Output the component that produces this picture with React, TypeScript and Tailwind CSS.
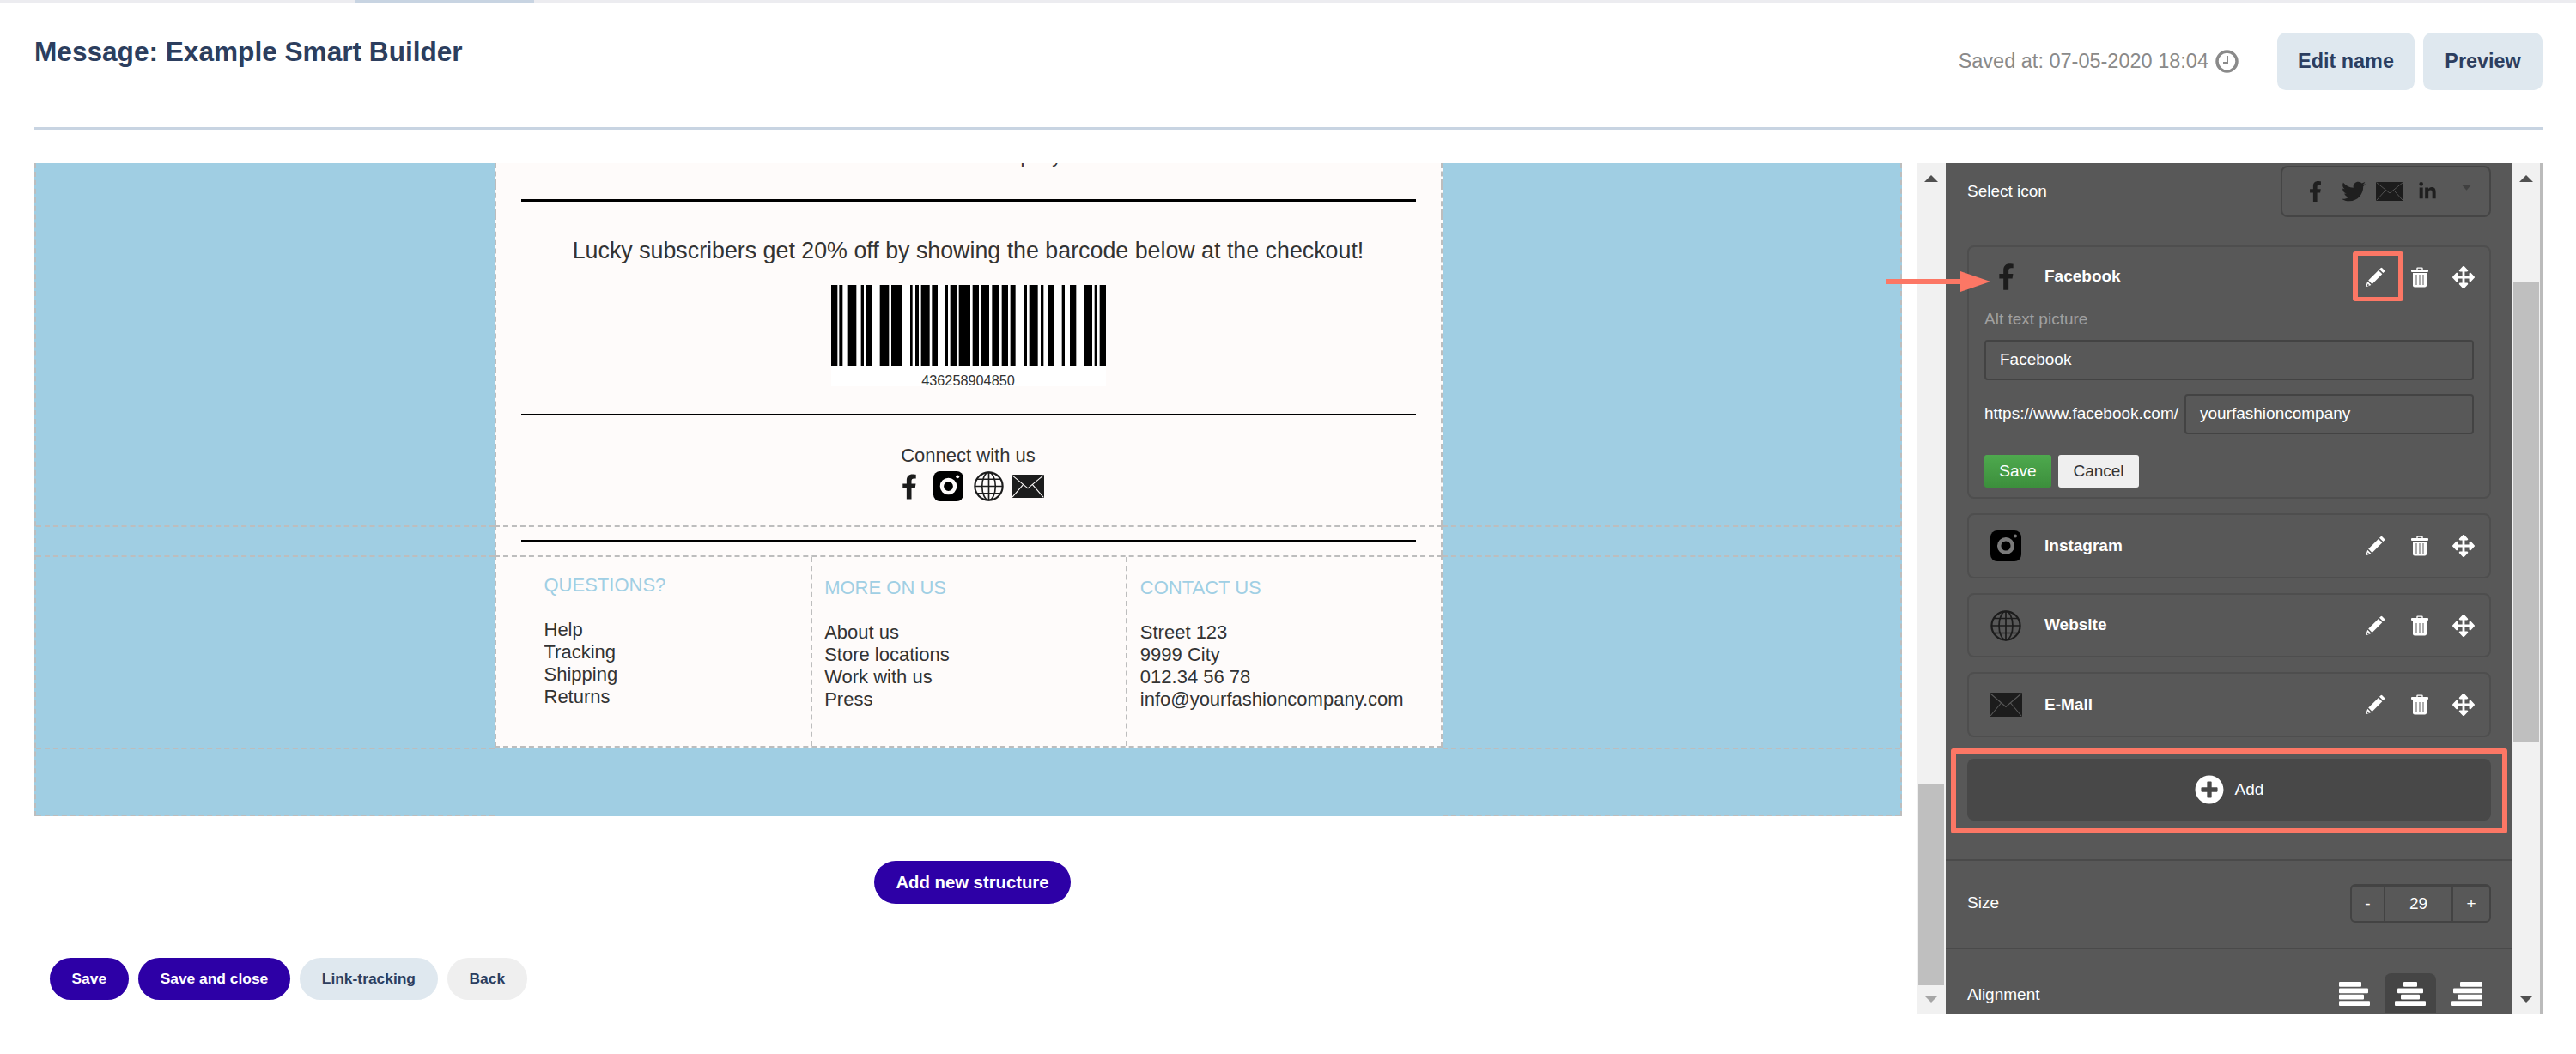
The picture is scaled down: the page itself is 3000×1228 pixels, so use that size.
import React from "react";
import { FaFacebookF, FaTwitter, FaLinkedinIn, FaArrowsAlt, FaPlusCircle } from "react-icons/fa";

const BARS: [number, number][] = [[24,46],[52,64],[80,112],[128,138],[146,168],[194,226],[234,272],[300,308],[318,330],[338,368],[376,396],[422,432],[440,462],[470,510],[518,540],[548,576],[586,612],[620,642],[650,668],[698,708],[716,746],[756,766],[782,802],[830,840],[858,880],[906,936],[944,954],[962,984]];

function Barcode() {
  return (
    <svg viewBox="24 0 960 285" preserveAspectRatio="none" className="block w-[320px] h-[95px]">
      {BARS.map(([a, b]) => <rect key={a} x={a} y={0} width={b - a} height={285} fill="#000" />)}
    </svg>
  );
}

function Insta({ ring, className }: { ring: string; className: string }) {
  return (
    <svg viewBox="0 0 36 36" className={className}>
      <rect x="0" y="0" width="36" height="36" rx="8" fill="#000" />
      <circle cx="18" cy="18" r="7.8" fill="none" stroke={ring} strokeWidth="4.5" />
      <circle cx="29" cy="6.5" r="2" fill={ring} />
    </svg>
  );
}

function Globe({ color, className }: { color: string; className: string }) {
  return (
    <svg viewBox="0 0 36 36" fill="none" stroke={color} strokeWidth="1.7" className={className}>
      <circle cx="18" cy="18" r="16.6" strokeWidth="2.2" />
      <ellipse cx="18" cy="18" rx="8" ry="16.6" />
      <path d="M18 1.5V34.5M1.5 18H34.5M4 9.5H32M4 26.5H32" />
    </svg>
  );
}

function Mail({ line, className }: { line: string; className: string }) {
  return (
    <svg viewBox="0 0 38 28" preserveAspectRatio="none" className={className}>
      <rect width="38" height="28" rx="1" fill="#1c1c1c" />
      <path d="M1 1L19 16.5L37 1M1 27L13.5 12M37 27L24.5 12" fill="none" stroke={line} strokeWidth="1.1" />
    </svg>
  );
}

function Pencil() {
  return (
    <svg viewBox="0 0 23 24" className="block w-[23px] h-[24px]" fill="#fff">
      <path d="M17.6 1.2Q18.4 .4 19.3 1.2L22 3.9Q22.8 4.7 22 5.5L20.4 7.1L16 2.8Z" />
      <path d="M14.9 3.9L19.3 8.3L7.6 20L3.2 15.6Z" />
      <path d="M2.2 16.8L6.4 21L0 23.6Z" />
      <path d="M2.6 19.6L4.3 21.3L1.6 22.4Z" fill="#585858" />
    </svg>
  );
}

function Trash() {
  return (
    <svg viewBox="0 0 20 24" className="block w-[20px] h-[24px]" fill="#fff">
      <path d="M6.3 3.4V1.6Q6.3 .4 7.5 .4H12.5Q13.7 .4 13.7 1.6V3.4H12.3V1.8H7.7V3.4Z" />
      <rect x="0" y="3" width="20" height="3" rx="1" />
      <path d="M2 7H18V21.5Q18 23.6 15.9 23.6H4.1Q2 23.6 2 21.5Z" />
      <path d="M5.3 9H6.7V21H5.3ZM9.3 9H10.7V21H9.3ZM13.3 9H14.7V21H13.3Z" fill="#8a8a8a" />
    </svg>
  );
}

function Arrow({ up, color }: { up?: boolean; color: string }) {
  return (
    <svg viewBox="0 0 16 8" className="block w-4 h-2 shrink-0">
      <polygon points={up ? "8,0 16,8 0,8" : "0,0 16,0 8,8"} fill={color} />
    </svg>
  );
}

function AlignIcon({ bars }: { bars: [number, number][] }) {
  return (
    <svg viewBox="0 0 36 28" className="block w-9 h-7">
      {bars.map(([x, w], i) => <rect key={i} x={x} y={i * 7.4} width={w} height={5.8} rx="1" fill="#fff" />)}
    </svg>
  );
}

function Actions() {
  return (
    <div className="flex items-center pr-[5px] text-white">
      <div className="w-[51px] flex justify-center"><Pencil /></div>
      <div className="w-[51px] flex justify-center"><Trash /></div>
      <div className="w-[51px] flex justify-center"><FaArrowsAlt className="w-[26px] h-[26px]" /></div>
    </div>
  );
}

function Card({ h, icon, name }: { h: string; icon: React.ReactNode; name: string }) {
  return (
    <div className={`${h} border-2 border-[#4e4e4e] rounded-lg flex items-center justify-between pl-[24px]`}>
      <div className="flex items-center">
        <div className="w-[38px] flex justify-center">{icon}</div>
        <span className="ml-[26px] font-bold text-white">{name}</span>
      </div>
      <Actions />
    </div>
  );
}

function Column({ pt, mb, title, items }: { pt: string; mb: string; title: string; items: string[] }) {
  return (
    <div className={`${pt} text-[22px] leading-[26px]`}>
      <div className={`${mb} text-[#a0cfe4]`}>{title}</div>
      {items.map((t) => <div key={t}>{t}</div>)}
    </div>
  );
}

function Scrollbar({ thumbTop, thumbH, bottomColor, extra }: { thumbTop: string; thumbH: string; bottomColor: string; extra: string }) {
  return (
    <div className={`${extra} h-full bg-[#f1f1f1] flex flex-col items-center pt-[14px] pb-[13px]`}>
      <Arrow up color="#505050" />
      <div className={`${thumbTop} ${thumbH} w-[30px] bg-[#bfbfbf]`} />
      <div className="mt-auto"><Arrow color={bottomColor} /></div>
    </div>
  );
}

function Row({ h, top, bottom, className, children }: { h: string; top?: string; bottom?: string; className?: string; children: React.ReactNode }) {
  const t = top ?? "";
  return (
    <div className={`${h} flex`}>
      <div className={`flex-1 ${t} border-dashed border-[#bdbdbd]`} />
      <div className={`w-[1104px] h-full bg-[#fefbfa] border-x-2 ${t} ${bottom ?? ""} border-dashed border-[#bdbdbd] ${className ?? ""}`}>{children}</div>
      <div className={`flex-1 ${t} border-dashed border-[#bdbdbd]`} />
    </div>
  );
}

export default function App() {
  return (
    <div className="relative w-[3000px] h-[1228px] overflow-hidden bg-white font-['Liberation_Sans',Arial,sans-serif]">
      <div className="flex h-[4px] bg-[#ececf0]">
        <div className="w-[414px]" />
        <div className="w-[208px] bg-[#c8d4e2]" />
      </div>

      <header className="ml-[40px] w-[2921px] h-[147px] border-b-[3px] border-[#c8d4e2] flex justify-between items-start">
        <h1 className="mt-[38px] text-[31.6px] leading-[36px] font-bold text-[#2c3e5e]">Message: Example Smart Builder</h1>
        <div className="mt-[34px] flex items-center">
          <span className="text-[23.5px] text-[#8a8a8a]">Saved at: 07-05-2020 18:04</span>
          <svg viewBox="0 0 27 27" fill="none" stroke="#8a8a8a" className="ml-[8px] w-[27px] h-[27px]">
            <circle cx="13.5" cy="13.5" r="11.5" strokeWidth="3.5" />
            <path d="M14 7V15H9" strokeWidth="2" />
          </svg>
          <button className="ml-[45px] w-[160px] h-[67px] rounded-[10px] bg-[#dfe8ef] text-[23.4px] font-bold text-[#2c3e60]">Edit name</button>
          <button className="ml-[10px] w-[139px] h-[67px] rounded-[10px] bg-[#dfe8ef] text-[23.4px] font-bold text-[#2c3e60]">Preview</button>
        </div>
      </header>

      <main className="mt-[39px] ml-[40px] flex h-[991px]">
        <div className="w-[2175px]">
          <section className="h-[761px] overflow-hidden bg-[#a0cee3] border-x-2 border-dashed border-[#bdbdbd] text-[#333]">
            <Row h="h-[25px]" className="overflow-hidden">
              <p className="-mt-[21px] pl-[51px] text-center text-[22px] leading-[26px]">fashion company</p>
            </Row>
            <Row h="h-[35px]" top="border-t" className="pt-[16px]">
              <div className="mx-[29px] h-[3px] bg-black" />
            </Row>
            <Row h="h-[362px]" top="border-t" className="pt-[24px]">
              <p className="text-center text-[26.8px] leading-[34px]">Lucky subscribers get 20% off by showing the barcode below at the checkout!</p>
              <div className="mt-[23px] mx-auto w-[320px] h-[118px] bg-white">
                <Barcode />
                <div className="pt-[7px] text-center text-[16.3px] leading-[18px]">436258904850</div>
              </div>
              <div className="mt-[32px] mx-[29px] h-[2px] bg-black" />
              <p className="mt-[34px] text-center text-[22px] leading-[26px]">Connect with us</p>
              <div className="mt-[5px] pl-[11px] flex justify-center items-center h-[35px]">
                <FaFacebookF className="w-[18px] h-[34px] text-[#1c1c1c]" />
                <Insta ring="#fefbfa" className="ml-[19px] w-[35px] h-[35px]" />
                <Globe color="#1c1c1c" className="ml-[12px] w-[35px] h-[35px]" />
                <Mail line="#fefbfa" className="ml-[9px] w-[38px] h-[27px]" />
              </div>
            </Row>
            <Row h="h-[35px]" top="border-t-2" className="pt-[15px]">
              <div className="mx-[29px] h-[2px] bg-black" />
            </Row>
            <Row h="h-[224px]" top="border-t-2" bottom="border-b-2" className="grid grid-cols-3">
              <div className="pl-[56px]">
                <Column pt="pt-[20px]" mb="mb-[26px]" title="QUESTIONS?" items={["Help", "Tracking", "Shipping", "Returns"]} />
              </div>
              <div className="pl-[14px] border-l-2 border-dashed border-[#bdbdbd]">
                <Column pt="pt-[23px]" mb="mb-[26px]" title="MORE ON US" items={["About us", "Store locations", "Work with us", "Press"]} />
              </div>
              <div className="pl-[15px] border-l-2 border-dashed border-[#bdbdbd]">
                <Column pt="pt-[23px]" mb="mb-[26px]" title="CONTACT US" items={["Street 123", "9999 City", "012.34 56 78", "info@yourfashioncompany.com"]} />
              </div>
            </Row>
            <div className="h-[80px] flex">
              <div className="flex-1 border-y-2 border-dashed border-[#bdbdbd]" />
              <div className="w-[1104px]" />
              <div className="flex-1 border-y-2 border-dashed border-[#bdbdbd]" />
            </div>
          </section>

          <div className="mt-[52px] pl-[10px] flex justify-center">
            <button className="w-[229px] h-[50px] rounded-full bg-[#2d00a6] text-white font-bold text-[20.3px]">Add new structure</button>
          </div>

          <div className="mt-[63px] pl-[18px] flex gap-[11.5px] text-[17.4px] font-bold">
            <button className="h-[49px] px-[25.5px] rounded-full bg-[#2d00a6] text-white">Save</button>
            <button className="h-[49px] px-[25.5px] rounded-full bg-[#2d00a6] text-white">Save and close</button>
            <button className="h-[49px] px-[25.5px] rounded-full bg-[#dfe8ef] text-[#2c3e60]">Link-tracking</button>
            <button className="h-[49px] px-[25.5px] rounded-full bg-[#efefef] text-[#2c3e60]">Back</button>
          </div>
        </div>

        <div className="ml-[17px]">
          <Scrollbar extra="w-[34px]" thumbTop="mt-[702px]" thumbH="h-[234px]" bottomColor="#a6a6a6" />
        </div>

        <aside className="w-[660px] h-full overflow-hidden bg-[#585858] text-[19px] text-white">
          <div className="px-[25px] pb-[30px] border-b-2 border-[#4a4a4a]">
            <div className="mt-[3px] h-[60px] flex items-center justify-between">
              <span>Select icon</span>
              <div className="relative w-[245px] h-[60px] border-2 border-[#454545] rounded-lg flex items-center text-[#1f1f1f]">
                <FaFacebookF className="ml-[31px] w-[15px] h-[26px]" />
                <FaTwitter className="ml-[20px] w-[34px] h-[28px]" />
                <Mail line="#585858" className="ml-[9px] w-[32px] h-[22px]" />
                <FaLinkedinIn className="ml-[17px] w-[22px] h-[22px]" />
                <div className="ml-[29px] -mt-[10px]"><svg viewBox="0 0 12 7" className="block w-[11px] h-[7px]"><polygon points="0,0 12,0 6,7" fill="#404040" /></svg></div>
              </div>
            </div>

            <div className="mt-[33px] flex flex-col gap-[17px]">
              <div className="h-[295px] border-2 border-[#4e4e4e] rounded-lg">
                <div className="h-[69px] flex items-center justify-between pl-[24px]">
                  <div className="flex items-center">
                    <div className="w-[38px] flex justify-center"><FaFacebookF className="w-[19px] h-[35px] text-[#1c1c1c]" /></div>
                    <span className="ml-[26px] font-bold">Facebook</span>
                  </div>
                  <Actions />
                </div>
                <div className="px-[18px]">
                  <div className="h-[30px] leading-[30px] text-[#a0a0a0]">Alt text picture</div>
                  <div className="mt-[9px] h-[47px] px-[16px] flex items-center border-2 border-[#434343] rounded-[4px]">Facebook</div>
                  <div className="mt-[16px] flex items-center justify-between">
                    <span>https://www.facebook.com/</span>
                    <div className="w-[337px] h-[47px] px-[16px] flex items-center border-2 border-[#434343] rounded-[4px]">yourfashioncompany</div>
                  </div>
                  <div className="mt-[24px] flex gap-[8px]">
                    <button className="w-[78px] h-[38px] rounded-[3px] bg-gradient-to-b from-[#4ea94e] to-[#3c8f3c] text-white">Save</button>
                    <button className="w-[94px] h-[38px] rounded-[3px] bg-[#efefef] text-[#333]">Cancel</button>
                  </div>
                </div>
              </div>
              <Card h="h-[76px]" name="Instagram" icon={<Insta ring="#7a7a7a" className="w-[36px] h-[36px]" />} />
              <Card h="h-[75px]" name="Website" icon={<Globe color="#1c1c1c" className="w-[36px] h-[36px]" />} />
              <Card h="h-[76px]" name="E-Mall" icon={<Mail line="#585858" className="w-[38px] h-[28px]" />} />
            </div>

            <div className="mt-[13px] -mx-[19px] px-[13px] pt-[6px] pb-[9px] border-[6px] border-[#fc7765] rounded-[3px]">
              <button className="w-full h-[72px] rounded-lg bg-[#484848] flex items-center justify-center text-white">
                <FaPlusCircle className="w-[34px] h-[34px]" />
                <span className="ml-[13px]">Add</span>
              </button>
            </div>
          </div>

          <div className="h-[103px] pb-[2px] px-[25px] flex items-center justify-between border-b-2 border-[#4a4a4a]">
            <span>Size</span>
            <div className="w-[164px] h-[45px] flex items-center border-2 border-t-[3px] border-[#434343] rounded-[6px] text-center">
              <span className="w-[37px]">-</span>
              <span className="w-[81px] h-full flex items-center justify-center border-x-2 border-[#434343]">29</span>
              <span className="flex-1">+</span>
            </div>
          </div>

          <div className="pl-[25px] flex items-start justify-between">
            <span className="mt-[39px]">Alignment</span>
            <div className="mt-[28px] mr-[35px] flex items-start">
              <div className="h-[46px] pt-[10px]"><AlignIcon bars={[[0,26],[0,34],[0,29],[0,36]]} /></div>
              <div className="ml-[17px] w-[60px] h-[46px] pt-[10px] rounded-t-lg bg-[#454545] flex justify-center"><AlignIcon bars={[[10,16],[3,30],[7,22],[0,36]]} /></div>
              <div className="ml-[18px] h-[46px] pt-[10px]"><AlignIcon bars={[[10,26],[2,34],[7,29],[0,36]]} /></div>
            </div>
          </div>
        </aside>

        <div className="border-r-[3px] border-[#bbbbbb]">
          <Scrollbar extra="w-[32px]" thumbTop="mt-[117px]" thumbH="h-[536px]" bottomColor="#505050" />
        </div>
      </main>

      <svg viewBox="0 0 122 24" className="absolute left-[2196px] top-[316px] w-[122px] h-[24px]">
        <path d="M0 9H87V0L122 12L87 24V15H0Z" fill="#fc7765" />
      </svg>
      <div className="absolute left-[2740px] top-[293px] w-[59px] h-[58px] border-x-[6px] border-y-[5px] border-[#fc7765] rounded-[3px]" />
    </div>
  );
}
